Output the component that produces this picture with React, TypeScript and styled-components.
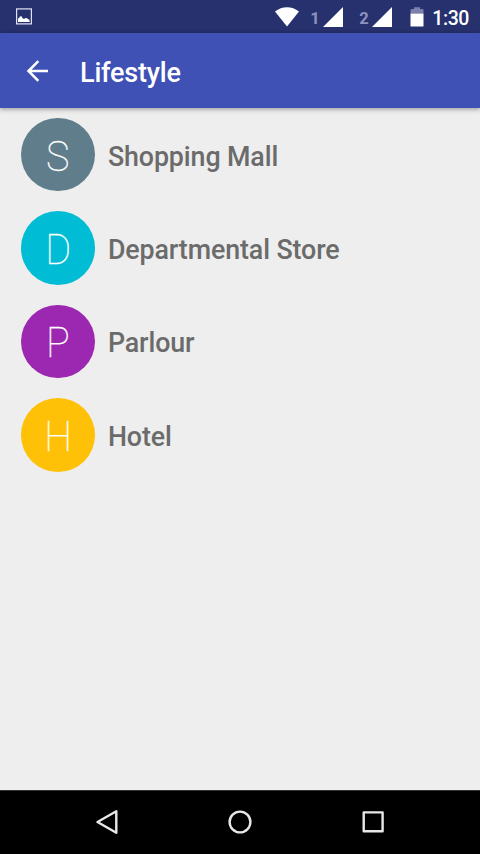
import React from 'react';
import styled, { createGlobalStyle } from 'styled-components';

const Global = createGlobalStyle`
  * { box-sizing: border-box; }
  body { margin: 0; background: #eeeeee; font-family: Roboto, sans-serif; }
  svg { display: block; flex: none; }
`;
const Screen = styled.div`
  width: 480px; height: 854px; display: flex; flex-direction: column; background: #eeeeee; overflow: hidden;
`;
const StatusBar = styled.header`
  height: 33px; flex: none; background: #27316e; display: flex; align-items: center; color: #fff;
  padding: 0 11px 0 16px;
`;
const StatusIcons = styled.div`
  margin-left: auto; display: flex; align-items: center;
`;
const Sim = styled.div<{ $gap: number }>`
  display: flex; align-items: center; gap: 4px; margin-left: ${p => p.$gap}px;
`;
const SimNumber = styled.span`
  width: 9px; display: flex; justify-content: center; font-size: 16.5px; line-height: 20px; font-weight: 700; color: #8c93bd; padding: 4px 0 0 1px;
`;
const Battery = styled.div`
  margin-left: 18px;
`;
const Clock = styled.time`
  width: 37px; margin-left: 8px; display: flex; justify-content: flex-end; font-size: 19.5px; letter-spacing: -0.4px;
  line-height: 31px; font-weight: 500; padding-top: 3px;
`;
const AppBar = styled.div`
  height: 75px; flex: none; background: #3f51b5; display: flex; align-items: center; padding-left: 26px;
  box-shadow: 0 1px 5px rgba(0,0,0,.4);
  z-index: 1;
`;
const BackButton = styled.button`
  border: 0; padding: 0; background: none;
`;
const Title = styled.h1`
  margin: 4px 0 0 31px; color: #fff; font-size: 27px; letter-spacing: -0.2px; font-weight: 500; line-height: 32px;
`;
const List = styled.ul`
  flex: 1; margin: 0; padding: 9.9px 21.3px; list-style: none; display: flex; flex-direction: column; gap: 19.8px;
`;
const Row = styled.li`
  height: 73.6px; flex: none; display: flex; align-items: center; gap: 13px;
`;
const Avatar = styled.span<{ $color: string }>`
  width: 73.6px; height: 73.6px; border-radius: 50%; background: ${p => p.$color}; color: #fff;
  display: flex; align-items: center; justify-content: center; font-size: 43px; font-weight: 100; padding: 2px 0 0;
`;
const Letter = styled.span`
  transform: scaleX(0.92);
  -webkit-text-stroke: 0.3px currentColor;
`;
const Label = styled.span`
  color: #6b6b6b; font-size: 26.8px; letter-spacing: -0.1px; line-height: 32px; font-weight: 500; padding-top: 4px;
`;
const NavBar = styled.nav`
  height: 64px; flex: none; background: #000; display: flex; justify-content: center; gap: 109px; align-items: center;
  border-top: 1px solid #333; padding-bottom: 2px;
`;
const NavButton = styled.button`
  border: 0; padding: 0; background: none; width: 24px; height: 26px;
`;

const items = [
  { name: 'Shopping Mall', color: '#607d8b' },
  { name: 'Departmental Store', color: '#00bcd4' },
  { name: 'Parlour', color: '#9c27b0' },
  { name: 'Hotel', color: '#ffc107' },
];

const Signal = () => (
  <svg width="20" height="20" viewBox="0 0 20 20"><path d="M20 0v20H0z" fill="#fff" /></svg>
);

export default function App() {
  return (
    <Screen>
      <Global />
      <StatusBar>
        <svg width="16" height="17" viewBox="0 0 16 17">
          <rect x=".6" y=".9" width="14.8" height="15" fill="none" stroke="#dfe2f3" strokeWidth="1.2" />
          <path d="M2 14v-3.4l1.2-.6.6-1.6 1.7-.2 1.3 2.2 1.3.7 1.2-1 1.8.2 1 1 1.2.2.4 2.5z" fill="#fff" />
        </svg>
        <StatusIcons>
          <svg width="24" height="20" viewBox="0 0 24 20"><path d="M0 4.5C7-1.3 17-1.3 24 4.5L12 19.5z" fill="#fff" /></svg>
          <Sim $gap={11}><SimNumber>1</SimNumber><Signal /></Sim>
          <Sim $gap={16}><SimNumber>2</SimNumber><Signal /></Sim>
          <Battery>
            <svg width="14" height="20" viewBox="0 0 14 20">
              <path d="M.5 6.5V3q0-1 1-1H4V.3h6V2h2.5q1 0 1 1v3.5z" fill="#7b81ab" />
              <path d="M.5 6.5h13V19q0 .6-.6.6H1.1q-.6 0-.6-.6z" fill="#fff" />
            </svg>
          </Battery>
          <Clock>1:30</Clock>
        </StatusIcons>
      </StatusBar>
      <AppBar>
        <BackButton aria-label="Back">
          <svg width="23" height="22" viewBox="0 0 23 22"><path d="M22 11H3M12.3 1.2 2.5 11l9.8 9.8" fill="none" stroke="#fff" strokeWidth="2.5" /></svg>
        </BackButton>
        <Title>Lifestyle</Title>
      </AppBar>
      <List>
        {items.map(i => (
          <Row key={i.name}>
            <Avatar $color={i.color}><Letter>{i.name[0]}</Letter></Avatar>
            <Label>{i.name}</Label>
          </Row>
        ))}
      </List>
      <NavBar>
        <NavButton aria-label="Back">
          <svg width="24" height="26" viewBox="0 0 24 26"><path d="M21.3 2.2v21.6L2.5 13z" fill="none" stroke="#e8e8e8" strokeWidth="2.4" strokeLinejoin="round" /></svg>
        </NavButton>
        <NavButton aria-label="Home">
          <svg width="24" height="26" viewBox="0 0 24 26"><circle cx="12" cy="13" r="10.4" fill="none" stroke="#e8e8e8" strokeWidth="2.4" /></svg>
        </NavButton>
        <NavButton aria-label="Recent apps">
          <svg width="24" height="26" viewBox="0 0 24 26"><rect x="2.7" y="3.4" width="18.9" height="18.9" fill="none" stroke="#e8e8e8" strokeWidth="2.4" strokeLinejoin="round" /></svg>
        </NavButton>
      </NavBar>
    </Screen>
  );
}
